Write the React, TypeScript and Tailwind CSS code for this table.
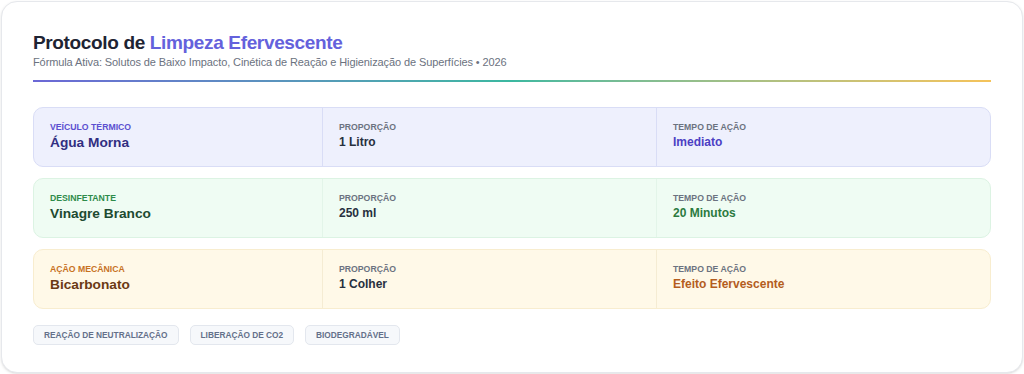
const rows = [
  {
    box: "bg-[#eef0fd] border-[#d9ddf6]",
    line: "border-[#d9ddf6]",
    label: "text-[#5b4fd0]",
    main: "text-[#312e81]",
    time: "text-[#4c3fc4]",
    kind: "Veículo Térmico",
    name: "Água Morna",
    amount: "1 Litro",
    action: "Imediato",
  },
  {
    box: "bg-[#effcf3] border-[#dcf3e3]",
    line: "border-[#e3f5e9]",
    label: "text-[#2e8b4a]",
    main: "text-[#1d4a30]",
    time: "text-[#2b7a3f]",
    kind: "Desinfetante",
    name: "Vinagre Branco",
    amount: "250 ml",
    action: "20 Minutos",
  },
  {
    box: "bg-[#fff9e8] border-[#f8edcf]",
    line: "border-[#f5ecd3]",
    label: "text-[#c7711f]",
    main: "text-[#6b3a14]",
    time: "text-[#b45d1e]",
    kind: "Ação Mecânica",
    name: "Bicarbonato",
    amount: "1 Colher",
    action: "Efeito Efervescente",
  },
];

const tags = ["Reação de Neutralização", "Liberação de CO2", "Biodegradável"];

export default function App() {
  return (
    <div
      className="w-[1024px] h-[374px] bg-white p-px"
      style={{ fontFamily: '"Liberation Sans", Arial, sans-serif' }}
    >
      <div className="h-[372px] rounded-2xl border border-[#e6e8ec] bg-white shadow-sm px-[31px] pt-[30px]">
        <h1 className="text-[19px] leading-[22px] font-bold tracking-[-0.35px] text-[#1e2433]">
          Protocolo de <span className="text-[#6461dc]">Limpeza Efervescente</span>
        </h1>
        <p className="mt-0 text-[11px] leading-4 tracking-[-0.1px] text-[#6b7280]">
          Fórmula Ativa: Solutos de Baixo Impacto, Cinética de Reação e Higienização de Superfícies • 2026
        </p>
        <div className="mt-[10px] h-[2px] w-[958px] bg-gradient-to-r from-[#6b67d6] via-[#3bb8a0] to-[#f5c35a]" />

        <div className="mt-[25px] w-[958px] flex flex-col gap-[11px]">
          {rows.map((r) => (
            <div
              key={r.name}
              className={`grid grid-cols-[288px_334px_1fr] h-[60px] rounded-[10px] border ${r.box}`}
            >
              <div className="px-4 pt-[13px]">
                <div className={`text-[8.7px] leading-3 font-bold uppercase ${r.label}`}>{r.kind}</div>
                <div className={`text-[13.7px] leading-[19px] font-bold ${r.main}`}>{r.name}</div>
              </div>
              <div className={`border-l px-4 pt-[13px] ${r.line}`}>
                <div className="text-[8.7px] leading-3 font-bold uppercase text-[#6b7280]">Proporção</div>
                <div className="text-[12px] leading-[19px] font-bold text-[#27303f]">{r.amount}</div>
              </div>
              <div className={`border-l px-4 pt-[13px] ${r.line}`}>
                <div className="text-[8.7px] leading-3 font-bold uppercase text-[#6b7280]">Tempo de Ação</div>
                <div className={`text-[12px] leading-[19px] font-bold ${r.time}`}>{r.action}</div>
              </div>
            </div>
          ))}
        </div>

        <div className="mt-[16px] flex gap-[11px]">
          {tags.map((t) => (
            <span
              key={t}
              className="h-[20px] px-[10px] flex items-center rounded-[5px] border border-[#e3e7ee] bg-[#f6f8fb] text-[8.3px] font-bold uppercase text-[#64708a]"
            >
              {t}
            </span>
          ))}
        </div>
      </div>
    </div>
  );
}
